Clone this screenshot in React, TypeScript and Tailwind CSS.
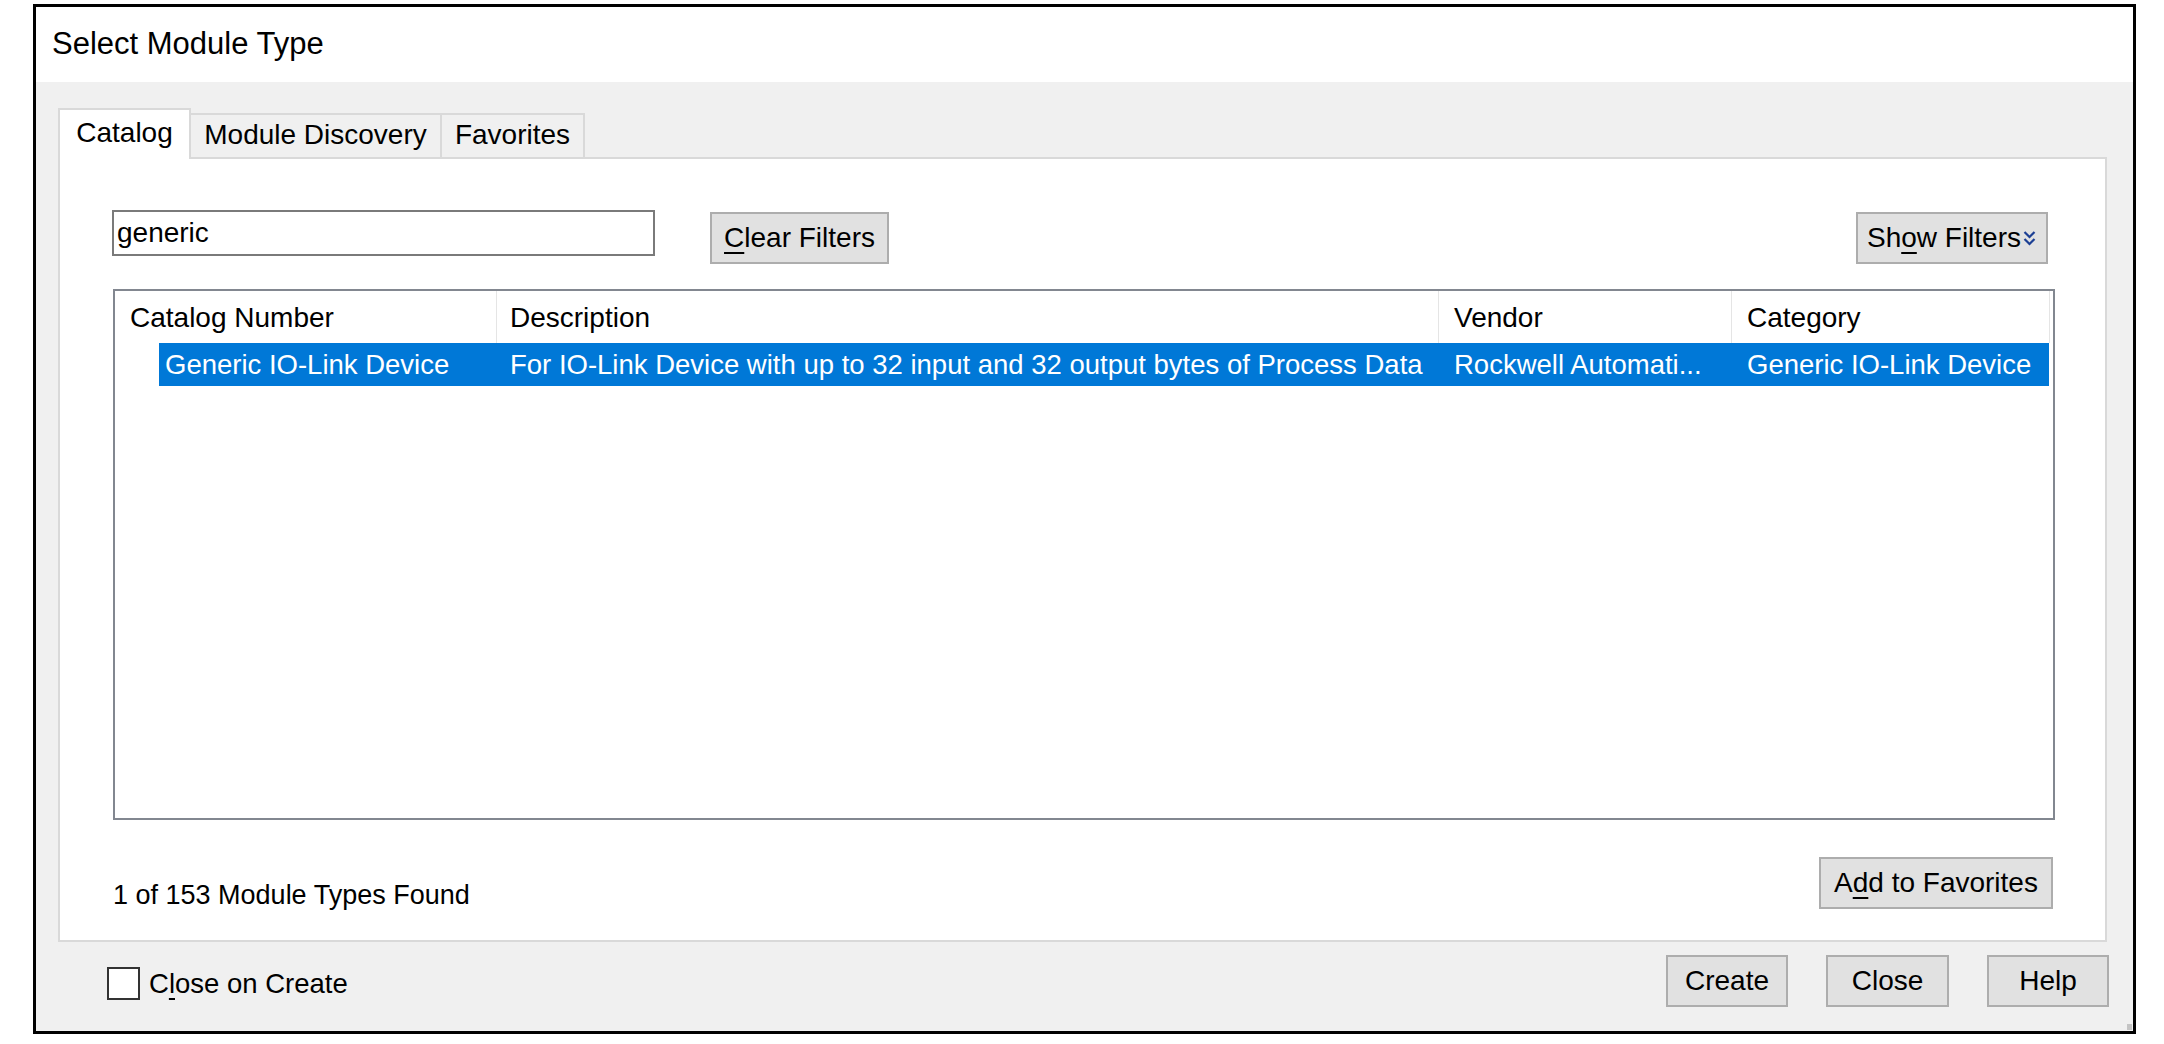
import type { ReactNode } from 'react'

// Keyboard-accelerator letter, drawn with the Windows-style underline
const Accel = ({ children }: { children: string }) => (
  <span className="underline decoration-2 underline-offset-[5px]">{children}</span>
)

const DlgButton = ({ className = '', children }: { className?: string; children: ReactNode }) => (
  <button
    type="button"
    className={`flex shrink-0 items-center justify-center border-2 border-[#adadad] bg-[#e1e1e1] text-[28px] leading-none text-black ${className}`}
  >
    {children}
  </button>
)

const DoubleChevron = () => (
  <svg width="15" height="18" viewBox="0 0 15 18" className="ml-[1px]">
    <polyline points="2.5,3 7.5,8 12.5,3" fill="none" stroke="#1c3f94" strokeWidth="2.2" />
    <polyline points="2.5,10 7.5,15 12.5,10" fill="none" stroke="#1c3f94" strokeWidth="2.2" />
  </svg>
)

const columns = [
  { title: 'Catalog Number', width: 'w-[382px]', pad: 'pl-[15px]' },
  { title: 'Description', width: 'w-[942px]', pad: 'pl-[13px]' },
  { title: 'Vendor', width: 'w-[293px]', pad: 'pl-[15px]' },
  { title: 'Category', width: 'w-[318px]', pad: 'pl-[15px]' },
]

const SelectModuleType = () => {
  return (
    <div className="relative flex h-[1030px] w-[2103px] flex-col border-[3px] border-black bg-[#f0f0f0]">
      {/* Title */}
      <div className="flex h-[75px] shrink-0 items-center bg-white pl-[16px] text-[31px]">Select Module Type</div>

      <div className="flex flex-1 flex-col pl-[22px] pr-[26px] pt-[26px]">
        {/* Tab strip */}
        <div className="flex h-[49px] items-end text-[28px] leading-none">
          <div className="relative z-10 -mb-[2px] flex h-[51px] w-[133px] items-center justify-center border-2 border-b-0 border-[#d9d9d9] bg-white pb-[4px]">
            Catalog
          </div>
          <div className="flex h-[44px] w-[251px] items-center justify-center border-2 border-b-0 border-l-0 border-[#d9d9d9] pb-[2px]">
            Module Discovery
          </div>
          <div className="flex h-[44px] w-[143px] items-center justify-center border-2 border-b-0 border-l-0 border-[#d9d9d9] pb-[2px]">
            Favorites
          </div>
        </div>

        {/* Catalog page */}
        <div className="flex h-[785px] w-[2049px] flex-col border-2 border-[#d9d9d9] bg-white text-[28px] leading-none">
          <div className="mt-[51px] flex h-[54px] items-start pl-[52px] pr-[57px]">
            <div className="flex h-[46px] w-[543px] items-center border-2 border-[#7a7a7a] bg-white px-[3px]">generic</div>
            <DlgButton className="ml-[55px] mt-[2px] h-[52px] w-[179px]">
              <Accel>C</Accel>lear Filters
            </DlgButton>
            <div className="flex-1" />
            <DlgButton className="mt-[2px] h-[52px] w-[192px]">
              Sh<Accel>o</Accel>w Filters
              <DoubleChevron />
            </DlgButton>
          </div>

          {/* Module list */}
          <div className="ml-[53px] mt-[25px] h-[531px] w-[1942px] border-2 border-[#828790] bg-white">
            <div className="flex h-[52px]">
              {columns.map((col) => (
                <div key={col.title} className={`flex items-center border-r border-[#e5e5e5] pt-[2px] ${col.width} ${col.pad}`}>
                  {col.title}
                </div>
              ))}
            </div>
            <div className="flex h-[43px] whitespace-nowrap text-[27.5px]">
              <div className="w-[44px] shrink-0" />
              <div className="flex flex-1 bg-[#0078d7] text-white">
                <div className="flex w-[338px] shrink-0 items-center pl-[6px]">Generic IO-Link Device</div>
                <div className="flex w-[942px] shrink-0 items-center pl-[13px]">
                  For IO-Link Device with up to 32 input and 32 output bytes of Process Data
                </div>
                <div className="flex w-[293px] shrink-0 items-center pl-[15px]">Rockwell Automati...</div>
                <div className="flex w-[316px] shrink-0 items-center pl-[15px]">Generic IO-Link Device</div>
              </div>
              <div className="w-[4px] shrink-0" />
            </div>
          </div>

          <div className="mt-[37px] flex items-end justify-between pl-[53px] pr-[52px]">
            <span className="text-[27px]">1 of 153 Module Types Found</span>
            <DlgButton className="h-[52px] w-[234px]">
              A<Accel>d</Accel>d to Favorites
            </DlgButton>
          </div>
        </div>

        {/* Footer */}
        <div className="flex items-start pt-[13px] text-[28px] leading-none">
          <label className="ml-[49px] mt-[12px] flex items-center">
            <span className="h-[33px] w-[33px] border-2 border-[#333333] bg-white" />
            <span className="ml-[9px] text-[27.5px]">
              C<Accel>l</Accel>ose on Create
            </span>
          </label>
          <div className="flex-1" />
          <div className="-mr-[2px] flex gap-[38px]">
            <DlgButton className="h-[52px] w-[122px]">Create</DlgButton>
            <DlgButton className="h-[52px] w-[123px]">Close</DlgButton>
            <DlgButton className="h-[52px] w-[122px]">Help</DlgButton>
          </div>
        </div>
      </div>

      {/* size grip */}
      <div className="absolute bottom-[1px] right-[1px] h-[6px] w-[5px] bg-[#c4c4c4]" />
    </div>
  )
}

export default function App() {
  return (
    <div className="h-[1044px] w-[2164px] bg-white pl-[33px] pt-[4px] font-['Liberation_Sans',Arial,sans-serif] text-black">
      <SelectModuleType />
    </div>
  )
}
